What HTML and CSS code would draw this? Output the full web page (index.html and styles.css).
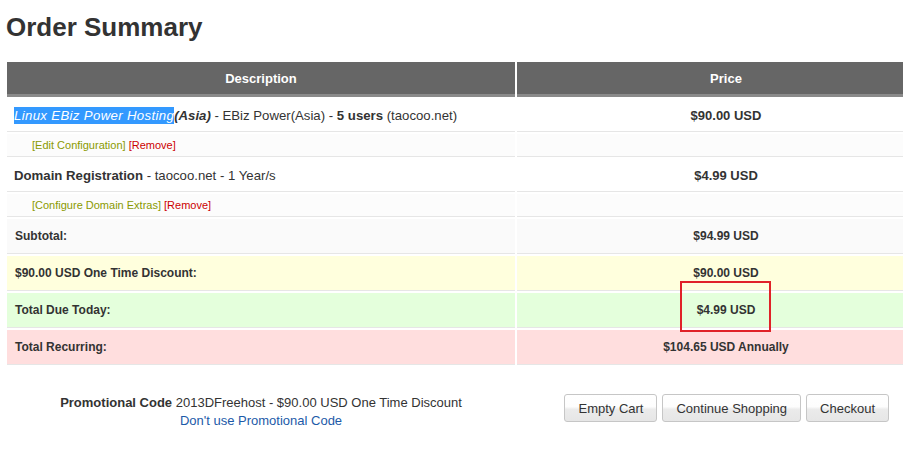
FILE: index.html
```html
<!DOCTYPE html>
<html>
<head>
<meta charset="utf-8">
<link rel="stylesheet" href="styles.css">
</head>
<body>
<div class="page">
  <h1 class="title">Order Summary</h1>
  <div class="cart">
    <div class="row head">
      <div class="cell">Description</div>
      <div class="cell">Price</div>
    </div>
    <div class="row item">
      <div class="cell desc"><span class="sel"><em>Linux EBiz Power Hosting</em></span><strong><em>(Asia)</em></strong> - EBiz Power(Asia) - <strong>5 users</strong> (taocoo.net)</div>
      <div class="cell price">$90.00 USD</div>
    </div>
    <div class="row links">
      <div class="cell"><a class="cfg">[Edit Configuration]</a> <a class="rem">[Remove]</a></div>
      <div class="cell"></div>
    </div>
    <div class="row item">
      <div class="cell desc"><strong>Domain Registration</strong> - taocoo.net - 1 Year/s</div>
      <div class="cell price">$4.99 USD</div>
    </div>
    <div class="row links">
      <div class="cell"><a class="cfg">[Configure Domain Extras]</a> <a class="rem">[Remove]</a></div>
      <div class="cell"></div>
    </div>
    <div class="row total subtotal">
      <div class="cell">Subtotal:</div>
      <div class="cell price">$94.99 USD</div>
    </div>
    <div class="row total discount">
      <div class="cell">$90.00 USD One Time Discount:</div>
      <div class="cell price">$90.00 USD</div>
    </div>
    <div class="row total due">
      <div class="cell">Total Due Today:</div>
      <div class="cell price"><span class="mark-wrap">$4.99 USD<span class="mark"></span></span></div>
    </div>
    <div class="row total recurring">
      <div class="cell">Total Recurring:</div>
      <div class="cell price">$104.65 USD Annually</div>
    </div>
  </div>
  <div class="footer">
    <div class="promo">
      <div><strong>Promotional Code</strong> 2013DFreehost - $90.00 USD One Time Discount</div>
      <a class="promo-link">Don't use Promotional Code</a>
    </div>
    <div class="buttons">
      <button class="btn btn-empty">Empty Cart</button>
      <button class="btn btn-continue">Continue Shopping</button>
      <button class="btn btn-checkout">Checkout</button>
    </div>
  </div>
</div>
</body>
</html>
```
FILE: styles.css
```css
html, body {
  margin: 0;
  padding: 0;
  overflow: hidden;
  background: #fff;
}
body {
  font-family: "Liberation Sans", Arial, sans-serif;
  color: #333;
  font-size: 13px;
}
.page {
  padding: 0 0 0 7px;
}
.title {
  margin: 0 0 0 -1px;
  padding-top: 11px;
  height: 62px;
  box-sizing: border-box;
  font-size: 26px;
  line-height: 32px;
  font-weight: bold;
  color: #333;
}
.cart {
  width: 928px;
  display: flex;
  flex-direction: column;
  row-gap: 2px;
}
.row {
  display: grid;
  grid-template-columns: 508px 1fr;
  column-gap: 2px;
}
.cell {
  display: flex;
  align-items: center;
  box-sizing: border-box;
  border-bottom: 1px solid #e6e6e6;
}
.head .cell {
  height: 35px;
  background: #666;
  color: #fff;
  font-weight: bold;
  justify-content: center;
  border-bottom: 3px solid #8a8a8a;
  padding-top: 1px;
}
.item .cell {
  height: 33px;
  background: #fff;
  padding-left: 7px;
}
.item .desc {
  display: block;
  line-height: 33px;
  font-size: 13.2px;
}
.price {
  justify-content: center;
  font-weight: bold;
  padding-left: 0 !important;
}
.sel {
  background: #3399ff;
  color: #fff;
  padding: 1px 0;
  letter-spacing: 0.35px;
}
.sel em, .desc em {
  font-style: italic;
}
.links .cell {
  display: block;
  height: 23px;
  line-height: 22px;
  background: #fcfcfc;
  font-size: 11px;
  padding-left: 25px;
}
.cfg { color: #8a9a00; }
.rem { color: #cc0000; }
.total .cell {
  height: 35px;
  font-weight: bold;
  font-size: 12px;
  padding-left: 8px;
}
.subtotal .cell { background: #fafafa; }
.discount .cell { background: #ffffdd; }
.due .cell { background: #e4ffdc; }
.recurring .cell { background: #ffdede; }
.mark-wrap {
  position: relative;
}
.mark {
  position: absolute;
  left: -17px;
  top: -22px;
  width: 87px;
  height: 47px;
  border: 2px solid #e02228;
}
.footer {
  display: flex;
  align-items: center;
  width: 882px;
  margin-top: 29px;
}
.promo {
  width: 508px;
  text-align: center;
  font-size: 13px;
  line-height: 18px;
}
.promo-link {
  color: #1c5aa8;
}
.buttons {
  margin-left: auto;
  display: flex;
  gap: 5px;
  margin-top: -8px;
}
.btn {
  height: 28px;
  padding: 0 13px;
  font-family: "Liberation Sans", Arial, sans-serif;
  font-size: 13px;
  color: #333;
  border: 1px solid #c6c6c6;
  border-radius: 3px;
  background: linear-gradient(#ffffff 0%, #fdfdfd 45%, #ebebeb 55%, #e6e6e6 100%);
}
```
